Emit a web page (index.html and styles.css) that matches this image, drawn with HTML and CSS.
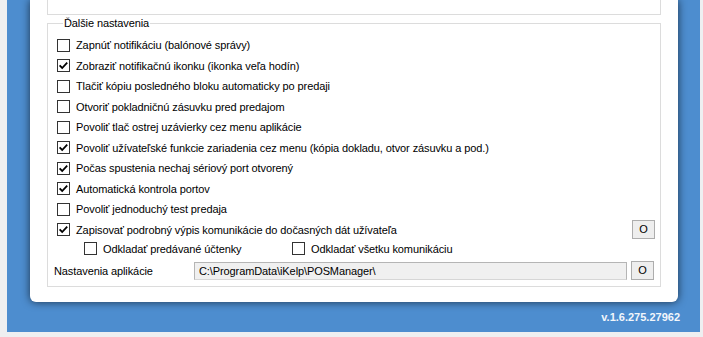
FILE: index.html
```html
<!DOCTYPE html>
<html lang="sk">
<head>
<meta charset="utf-8">
<title>Nastavenia</title>
<link rel="stylesheet" href="styles.css">
</head>
<body>
<div class="frame">
  <div class="card">
    <div class="topbox"></div>
    <fieldset class="group">
      <legend>Ďalšie nastavenia</legend>
      <div class="row"><span class="box"></span>Zapnúť notifikáciu (balónové správy)</div>
      <div class="row"><span class="box on"><svg viewBox="0 0 13 13"><path d="M2.6 6.4 L5.2 9 L10.2 3.6"/></svg></span>Zobraziť notifikačnú ikonku (ikonka veľa hodín)</div>
      <div class="row"><span class="box"></span>Tlačiť kópiu posledného bloku automaticky po predaji</div>
      <div class="row"><span class="box"></span>Otvoriť pokladničnú zásuvku pred predajom</div>
      <div class="row"><span class="box"></span>Povoliť tlač ostrej uzávierky cez menu aplikácie</div>
      <div class="row"><span class="box on"><svg viewBox="0 0 13 13"><path d="M2.6 6.4 L5.2 9 L10.2 3.6"/></svg></span>Povoliť užívateľské funkcie zariadenia cez menu (kópia dokladu, otvor zásuvku a pod.)</div>
      <div class="row"><span class="box on"><svg viewBox="0 0 13 13"><path d="M2.6 6.4 L5.2 9 L10.2 3.6"/></svg></span>Počas spustenia nechaj sériový port otvorený</div>
      <div class="row"><span class="box on"><svg viewBox="0 0 13 13"><path d="M2.6 6.4 L5.2 9 L10.2 3.6"/></svg></span>Automatická kontrola portov</div>
      <div class="row"><span class="box"></span>Povoliť jednoduchý test predaja</div>
      <div class="row"><span class="box on"><svg viewBox="0 0 13 13"><path d="M2.6 6.4 L5.2 9 L10.2 3.6"/></svg></span>Zapisovať podrobný výpis komunikácie do dočasných dát užívateľa<span class="spacer"></span><button class="btn">O</button></div>
      <div class="subrow">
        <div class="sub first"><span class="box"></span>Odkladať predávané účtenky</div>
        <div class="sub"><span class="box"></span>Odkladať všetku komunikáciu</div>
      </div>
      <div class="pathrow">
        <span class="label">Nastavenia aplikácie</span>
        <span class="field">C:\ProgramData\iKelp\POSManager\</span>
        <button class="btn">O</button>
      </div>
    </fieldset>
  </div>
  <div class="version">v.1.6.275.27962</div>
</div>
</body>
</html>
```

FILE: styles.css
```css
html, body {
  margin: 0;
  padding: 0;
}
body {
  background: #eeeff1;
  font-family: "Liberation Sans", Arial, sans-serif;
  font-size: 11px;
  letter-spacing: -0.1px;
  color: #000;
  width: 703px;
  height: 337px;
  overflow: hidden;
}
.frame {
  margin-left: 7px;
  width: 693px;
  height: 332px;
  box-sizing: border-box;
  background: #4d8dcf;
  padding: 0 22px 0 23px;
  display: flex;
  flex-direction: column;
}
.card {
  width: 648px;
  box-sizing: border-box;
  background: #fff;
  border-radius: 0 0 6px 6px;
  box-shadow: 0 0 9px rgba(0, 0, 0, 0.65);
  padding: 0 17px 15px 17px;
}
.topbox {
  height: 14px;
  border: 1px solid #dcdcdc;
  border-top: none;
}
.group {
  margin: 2px 0 0 0;
  padding: 5px 5px 6px 9px;
  border: 1px solid #dcdcdc;
  min-width: 0;
}
.group legend {
  padding: 0 1px;
  margin-left: 6px;
  line-height: 13px;
}
.row {
  height: 20.5px;
  display: flex;
  align-items: center;
  white-space: nowrap;
}
.box {
  width: 13px;
  height: 13px;
  box-sizing: border-box;
  border: 1px solid #333;
  background: #fff;
  margin-right: 6px;
  flex: none;
  position: relative;
}
.box svg {
  position: absolute;
  left: -1px;
  top: -1px;
  width: 13px;
  height: 13px;
}
.box svg path {
  fill: none;
  stroke: #000;
  stroke-width: 1.8;
}
.spacer {
  flex: 1;
}
.btn {
  width: 23px;
  height: 19px;
  margin: 0;
  padding: 0;
  border: 1px solid #adadad;
  background: #eeeeee;
  font-family: "Liberation Sans", Arial, sans-serif;
  font-size: 11px;
  font-weight: normal;
  color: #000;
  line-height: 17px;
  text-align: center;
}
.subrow {
  height: 17px;
  display: flex;
  align-items: center;
  padding-left: 27px;
}
.sub {
  display: flex;
  align-items: center;
  white-space: nowrap;
}
.sub.first {
  width: 208px;
}
.pathrow {
  margin-top: 4px;
  height: 19px;
  display: flex;
  align-items: center;
  margin-left: -3px;
}
.label {
  width: 140px;
}
.field {
  width: 433px;
  height: 18px;
  box-sizing: border-box;
  border: 1px solid #b5b5b5;
  border-bottom-color: #d6d6d6;
  background: #f0f0f0;
  padding-left: 4px;
  line-height: 16px;
  margin-right: 4px;
  white-space: nowrap;
}
.version {
  margin-top: 9px;
  margin-right: -2px;
  text-align: right;
  color: #f2f6fb;
  font-weight: bold;
  font-size: 11px;
  letter-spacing: 0;
  line-height: 13px;
}
```
